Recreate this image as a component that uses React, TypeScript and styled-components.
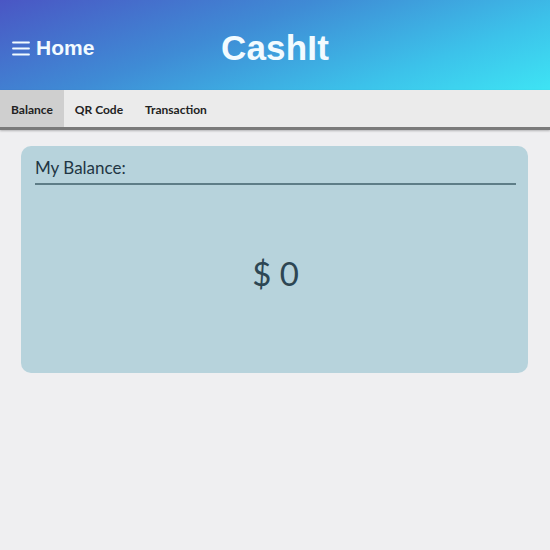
import React from 'react';
import styled, { createGlobalStyle } from 'styled-components';

const GlobalStyle = createGlobalStyle`
  html, body {
    margin: 0;
    padding: 0;
    background: #efeff1;
    font-family: Lato, 'Open Sans', sans-serif;
  }
`;

const Page = styled.div`
  width: 550px;
  min-height: 550px;
  background: #efeff1;
`;

const Header = styled.header`
  height: 90px;
  display: grid;
  grid-template-columns: 1fr auto 1fr;
  align-items: center;
  padding: 6px 12px 0;
  box-sizing: border-box;
  background: linear-gradient(160deg, #4a56c4 0%, #3f8bd5 40%, #3cc2ea 75%, #3ee4f4 100%);
  color: #f2fbff;
  font-family: 'Liberation Sans', Arial, sans-serif;
  font-weight: bold;
`;

const MenuButton = styled.div`
  display: flex;
  align-items: center;
  gap: 6px;
  font-size: 21px;
`;

const Title = styled.h1`
  margin: 0;
  font-size: 35px;
  letter-spacing: 0.2px;
`;

const TabBar = styled.nav`
  display: flex;
  height: 37px;
  background: #ebebeb;
  border-bottom: 3px solid #7a7a7a;
  box-shadow: 0 1px 2px rgba(0, 0, 0, 0.25);
`;

const Tab = styled.div<{ $active?: boolean }>`
  display: flex;
  align-items: center;
  padding: 1px 11px 0;
  font-size: 12px;
  font-weight: 700;
  color: #222;
  background: ${(p) => (p.$active ? '#cfcfcf' : 'transparent')};
`;

const Content = styled.main`
  padding: 16px 22px 0 21px;
`;

const Card = styled.section`
  height: 227px;
  background: #b7d3dc;
  border-radius: 10px;
  padding: 11px 12px 0 14px;
  box-sizing: border-box;
  display: flex;
  flex-direction: column;
`;

const CardTitle = styled.div`
  font-size: 17px;
  color: #1f3644;
  padding-bottom: 5px;
  border-bottom: 2px solid #5e7d87;
`;

const Amount = styled.div`
  flex: 1;
  display: flex;
  align-items: center;
  justify-content: center;
  font-size: 33px;
  color: #2d4653;
  padding-bottom: 12px;
`;

function Hamburger() {
  return (
    <svg width="18" height="15" viewBox="0 0 18 15" fill="none" stroke="#f2fbff" strokeWidth="1.8" strokeLinecap="round">
      <line x1="1" y1="1.5" x2="17" y2="1.5" />
      <line x1="1" y1="7.5" x2="17" y2="7.5" />
      <line x1="1" y1="13.5" x2="17" y2="13.5" />
    </svg>
  );
}

export default function App() {
  return (
    <Page>
      <GlobalStyle />
      <Header>
        <MenuButton>
          <Hamburger />
          Home
        </MenuButton>
        <Title>CashIt</Title>
        <div />
      </Header>
      <TabBar>
        <Tab $active>Balance</Tab>
        <Tab>QR Code</Tab>
        <Tab>Transaction</Tab>
      </TabBar>
      <Content>
        <Card>
          <CardTitle>My Balance:</CardTitle>
          <Amount>$ 0</Amount>
        </Card>
      </Content>
    </Page>
  );
}
